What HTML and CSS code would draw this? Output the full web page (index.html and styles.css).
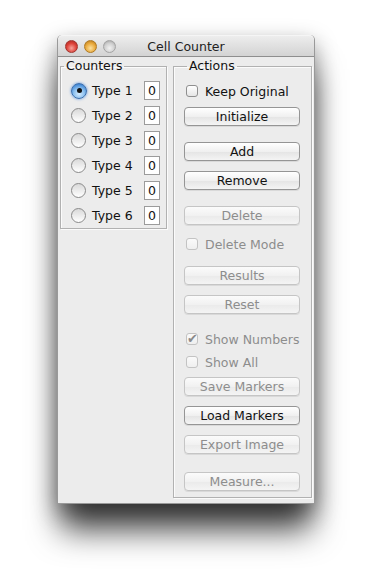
FILE: index.html
```html
<!DOCTYPE html>
<html lang="en">
<head>
    <meta charset="UTF-8">
    <meta name="viewport" content="width=device-width, initial-scale=1.0">
    <title>Cell Counter</title>
    <link rel="stylesheet" href="styles.css">
</head>
<body>
    <div class="window">
        <div class="titlebar">
            <div class="lights">
                <span class="light red"></span>
                <span class="light orange"></span>
                <span class="light gray"></span>
            </div>
            <div class="title">Cell Counter</div>
            <div></div>
        </div>

        <div class="content">
            <fieldset class="panel counters">
                <legend>Counters</legend>
                <div class="counter"><span class="radio checked"></span><span class="type">Type 1</span><span class="count">0</span></div>
                <div class="counter"><span class="radio"></span><span class="type">Type 2</span><span class="count">0</span></div>
                <div class="counter"><span class="radio"></span><span class="type">Type 3</span><span class="count">0</span></div>
                <div class="counter"><span class="radio"></span><span class="type">Type 4</span><span class="count">0</span></div>
                <div class="counter"><span class="radio"></span><span class="type">Type 5</span><span class="count">0</span></div>
                <div class="counter"><span class="radio"></span><span class="type">Type 6</span><span class="count">0</span></div>
            </fieldset>

            <fieldset class="panel actions">
                <legend>Actions</legend>
                <div class="check first"><span class="box"></span>Keep Original</div>
                <button class="btn tight">Initialize</button>
                <button class="btn spaced">Add</button>
                <button class="btn">Remove</button>
                <button class="btn spaced" disabled>Delete</button>
                <div class="check off"><span class="box"></span>Delete Mode</div>
                <button class="btn wide" disabled>Results</button>
                <button class="btn" disabled>Reset</button>
                <div class="check off spaced"><span class="box ticked">&#10004;</span>Show Numbers</div>
                <div class="check off close"><span class="box"></span>Show All</div>
                <button class="btn snug" disabled>Save Markers</button>
                <button class="btn">Load Markers</button>
                <button class="btn" disabled>Export Image</button>
                <button class="btn far" disabled>Measure...</button>
            </fieldset>
        </div>
    </div>
</body>
</html>
```

FILE: styles.css
```css
html {
    background: #fff;
}
body {
    margin: 0;
    min-height: 581px;
    padding-top: 35px;
    box-sizing: border-box;
    font-family: "DejaVu Sans", sans-serif;
    font-size: 12px;
    color: #111;
}
.window {
    width: 258px;
    margin-left: 57px;
    background: #ececec;
    border: 1px solid rgba(0, 0, 0, 0.35);
    border-top: none;
    border-radius: 5px 5px 0 0;
    box-sizing: border-box;
    box-shadow: 0 30px 32px -4px rgba(0, 0, 0, 0.72), 0 8px 22px rgba(0, 0, 0, 0.38);
}
.titlebar {
    height: 22px;
    display: grid;
    grid-template-columns: 1fr auto 1fr;
    align-items: center;
    background: linear-gradient(#ededed, #d3d3d3);
    border-bottom: 1px solid #8e8e8e;
    border-top: 1px solid #f5f5f5;
    border-radius: 5px 5px 0 0;
    box-sizing: border-box;
}
.lights {
    display: flex;
    gap: 6px;
    padding-left: 7px;
}
.light {
    width: 13px;
    height: 13px;
    border-radius: 50%;
    box-sizing: border-box;
}
.red {
    background: radial-gradient(circle at 50% 65%, #f7a39b, #dc3f36 55%, #9d2a24);
    border: 1px solid #a1352f;
}
.orange {
    background: radial-gradient(circle at 50% 65%, #fbe1a0, #e9a83a 55%, #a8711d);
    border: 1px solid #b07a22;
}
.gray {
    background: radial-gradient(circle at 50% 65%, #f2f2f2, #cfcfcf 55%, #9b9b9b);
    border: 1px solid #a4a4a4;
}
.title {
    font-size: 12.5px;
    color: #222;
}
.content {
    display: flex;
    align-items: flex-start;
    gap: 6px;
    padding: 2px 2px 5px 2px;
}
.panel {
    margin: 0;
    border: 1px solid #b1b1b1;
    box-shadow: 1px 1px 0 #fbfbfb, inset 1px 1px 0 #fbfbfb;
    box-sizing: border-box;
}
.panel legend {
    margin-left: 3px;
    padding: 0 2px;
    line-height: 14px;
    font-size: 12.5px;
}
.counters {
    width: 107px;
    padding: 5px 0 0 0;
}
.counter {
    height: 25px;
    display: flex;
    align-items: center;
    padding-left: 10px;
}
.radio {
    width: 15px;
    height: 15px;
    border-radius: 50%;
    border: 1px solid #8a8a8a;
    background: linear-gradient(#d9d9d9, #ffffff);
    box-sizing: border-box;
    margin-right: 6px;
    flex: none;
    display: flex;
    align-items: center;
    justify-content: center;
}
.radio.checked {
    width: 16px;
    height: 16px;
    margin-right: 5px;
    border-color: #3c6fae;
    background: radial-gradient(circle at 50% 70%, #d6ecff, #8cc0ef 45%, #3f86d4 80%, #2f64ab);
    box-shadow: 0 0 2px 1px rgba(90, 150, 230, 0.5);
}
.radio.checked::after {
    content: "";
    width: 5px;
    height: 5px;
    border-radius: 50%;
    background: #111;
}
.type {
    flex: 1;
    font-size: 12.5px;
}
.count {
    width: 16px;
    height: 19px;
    margin-right: 6px;
    background: #fff;
    border: 1px solid #9b9b9b;
    box-sizing: border-box;
    display: flex;
    align-items: center;
    justify-content: center;
    font-size: 12.5px;
}
.actions {
    width: 139px;
    padding: 0 11px 6px 10px;
    display: flex;
    flex-direction: column;
}
.actions > * {
    margin-top: 10px;
}
.actions > .first {
    margin-top: 9px;
}
.actions > .tight {
    margin-top: 7px;
}
.actions > .snug {
    margin-top: 6px;
}
.actions > .spaced {
    margin-top: 16px;
}
.actions > .far {
    margin-top: 18px;
}
.actions > .close {
    margin-top: 5px;
}
.actions > .wide {
    margin-top: 13px;
}
.check {
    height: 18px;
    display: flex;
    align-items: center;
    font-size: 12.5px;
}
.check.off {
    color: #8d8d8d;
}
.box {
    width: 12px;
    height: 12px;
    margin: 0 7px 0 2px;
    border: 1px solid #8f8f8f;
    border-radius: 3px;
    background: linear-gradient(#ffffff, #e6e6e6);
    box-sizing: border-box;
    flex: none;
}
.check.off .box {
    border-color: #c3c3c3;
    background: linear-gradient(#fafafa, #efefef);
}
.box.ticked {
    font-size: 13px;
    line-height: 10px;
    color: #8a8a8a;
}
.btn {
    height: 19px;
    width: 116px;
    padding: 0;
    font-family: "DejaVu Sans", sans-serif;
    font-size: 12.5px;
    color: #111;
    background: linear-gradient(#ffffff, #f0f0f0 50%, #e4e4e4 51%, #f4f4f4);
    border: 1px solid #959595;
    border-radius: 4px;
    box-shadow: 0 1px 0 rgba(0, 0, 0, 0.08);
}
.btn:disabled {
    color: #8d8d8d;
    border-color: #c5c5c5;
    background: linear-gradient(#fbfbfb, #f1f1f1 50%, #eaeaea 51%, #f4f4f4);
}
```
